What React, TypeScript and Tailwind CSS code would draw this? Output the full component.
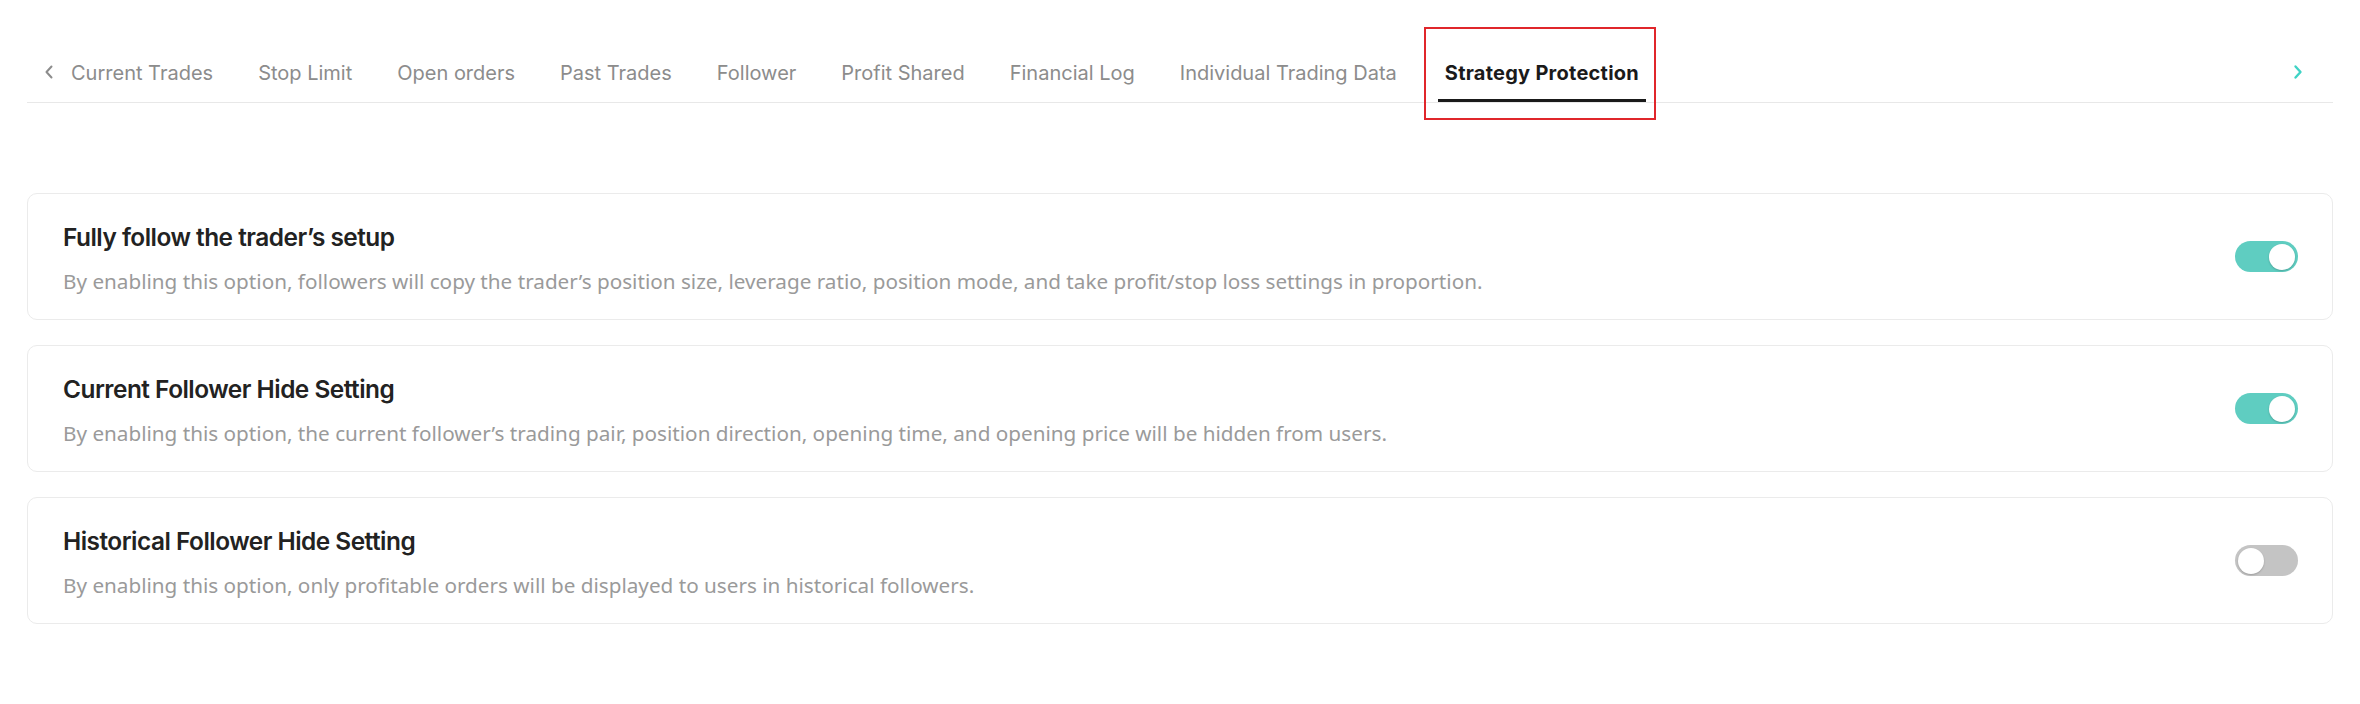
import { useState } from "react";

const tabs = [
  "Current Trades",
  "Stop Limit",
  "Open orders",
  "Past Trades",
  "Follower",
  "Profit Shared",
  "Financial Log",
  "Individual Trading Data",
];

const settings = [
  {
    title: "Fully follow the trader’s setup",
    desc: "By enabling this option, followers will copy the trader’s position size, leverage ratio, position mode, and take profit/stop loss settings in proportion.",
    on: true,
  },
  {
    title: "Current Follower Hide Setting",
    desc: "By enabling this option, the current follower’s trading pair, position direction, opening time, and opening price will be hidden from users.",
    on: true,
  },
  {
    title: "Historical Follower Hide Setting",
    desc: "By enabling this option, only profitable orders will be displayed to users in historical followers.",
    on: false,
  },
];

const Toggle = ({ on, onClick }: { on: boolean; onClick: () => void }) => (
  <button
    onClick={onClick}
    className={`flex items-center w-[63px] h-[31px] rounded-full px-[3px] ${
      on ? "bg-[#5fcdc1] justify-end" : "bg-[#c4c4c4] justify-start"
    }`}
  >
    <span className="block w-[26px] h-[26px] rounded-full bg-white shadow-[0_1px_2px_rgba(0,0,0,0.2)]" />
  </button>
);

export default function App() {
  const [state, setState] = useState(settings.map((s) => s.on));

  return (
    <div className="min-h-screen bg-white px-[27px] font-['Inter',sans-serif]">
      {/* tabs */}
      <div className="flex items-end justify-between border-b border-[#e8e8e8] pt-[59px]">
        <div className="flex items-end">
          <span className="ml-[17px] mb-[22px] text-[#8c8c8c]">
            <svg width="10" height="16" viewBox="0 0 10 16" fill="none">
              <path d="M7.5 2.5L2.5 8l5 5.5" stroke="currentColor" strokeWidth="2" strokeLinecap="round" strokeLinejoin="round" />
            </svg>
          </span>
          <div className="ml-[10px] flex items-end gap-[31px]">
            {tabs.map((t) => (
              <div
                key={t}
                className="px-[7px] pb-[15px] text-[20px] leading-[28px] text-[#8c8c8c]"
              >
                {t}
              </div>
            ))}
            <div className="relative ml-[3px]">
              <div className="px-[7px] pb-[12px] text-[20px] leading-[28px] font-bold tracking-[0.25px] text-[#1a1a1a] border-b-[3px] border-[#1a1a1a]">
                Strategy Protection
              </div>
              <span className="pointer-events-none absolute -left-[14px] -right-[10px] -top-[32px] -bottom-[18px] border-2 border-[#e0262b]" />
            </div>
          </div>
        </div>
        <span className="mr-[30px] mb-[22px] text-[#3fd3c5]">
          <svg width="10" height="16" viewBox="0 0 10 16" fill="none">
            <path d="M2.5 2.5L7.5 8l-5 5.5" stroke="currentColor" strokeWidth="2.4" strokeLinecap="round" strokeLinejoin="round" />
          </svg>
        </span>
      </div>

      {/* settings */}
      <div className="mt-[90px] flex flex-col gap-[25px]">
        {settings.map((s, i) => (
          <div
            key={s.title}
            className="flex items-center justify-between h-[127px] rounded-[10px] border border-[#ebebeb] pl-[35px] pr-[34px]"
          >
            <div className="flex flex-col gap-[15px] pt-[3px]">
              <div className="text-[24.4px] leading-[30px] font-semibold tracking-[-0.5px] text-[#222222]">
                {s.title}
              </div>
              <div className="font-['Noto_Sans',sans-serif] text-[20.7px] leading-[28px] text-[#9a9a9a]">
                {s.desc}
              </div>
            </div>
            <Toggle
              on={state[i]}
              onClick={() => setState((p) => p.map((v, j) => (j === i ? !v : v)))}
            />
          </div>
        ))}
      </div>
    </div>
  );
}
